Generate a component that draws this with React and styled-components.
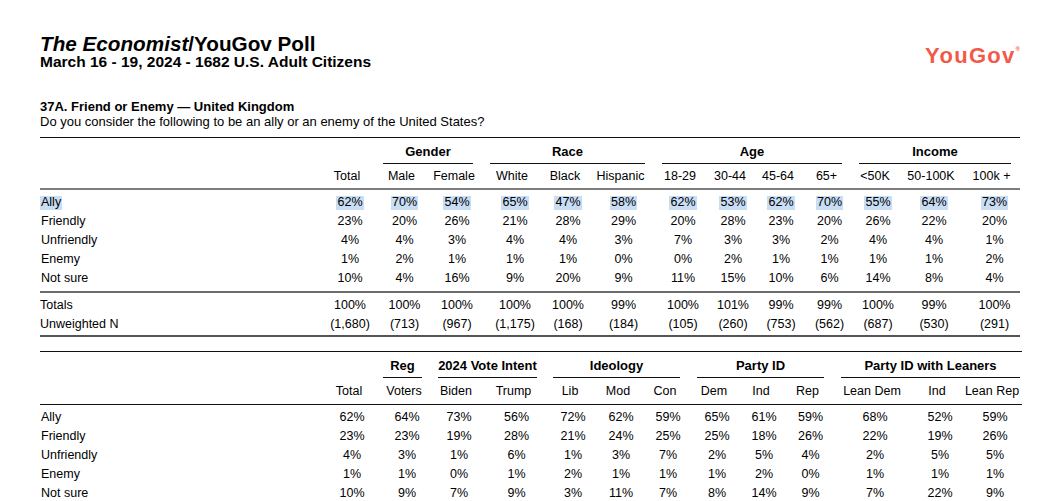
import React from 'react';
import styled, { createGlobalStyle } from 'styled-components';

const GlobalStyle = createGlobalStyle`
  body {
    margin: 0;
    background: #fff;
    color: #000;
    font-family: "Liberation Sans", Arial, Helvetica, sans-serif;
  }
`;

const Page = styled.div`
  width: 982px;
  padding: 34px 0 0 40px;
`;

const Masthead = styled.header`
  display: flex;
  justify-content: space-between;
  align-items: flex-start;
  width: 980px;
`;

const Title = styled.h1`
  margin: 0;
  font-size: 20.7px;
  line-height: 20px;
  font-weight: bold;
  em { font-style: italic; }
`;

const Dates = styled.h2`
  margin: 0;
  font-size: 15.5px;
  line-height: 15px;
  font-weight: bold;
`;

const Logo = styled.div`
  display: flex;
  align-items: flex-start;
  padding-top: 11px;
  color: #f25a48;
  font-size: 22px;
  line-height: 22px;
  font-weight: bold;
  letter-spacing: 1.3px;
`;

const Registered = styled.span`
  font-size: 6px;
  line-height: 6px;
  margin: 1px 0 0 0;
  letter-spacing: 0;
`;

const QuestionTitle = styled.h3`
  margin: 30px 0 0;
  font-size: 13px;
  line-height: 15px;
  font-weight: bold;
`;

const Question = styled.p`
  margin: 0;
  font-size: 13px;
  line-height: 15px;
`;

const Table = styled.section`
  width: ${p => p.$width}px;
  margin-top: ${p => p.$gap}px;
  border-top: 1px solid #111;
  border-bottom: ${p => p.$bottom || 'none'};
  font-size: 12.5px;
  line-height: 19px;
`;

const Band = styled.div`
  display: grid;
  grid-template-columns: ${p => p.$cols};
  padding: ${p => p.$pad};
  border-bottom: ${p => p.$rule || 'none'};
`;

const Blank = styled.div`
  grid-column: span ${p => p.$span};
`;

const GroupHead = styled.div`
  grid-column: span ${p => p.$span};
  margin: 0 ${p => p.$r ?? 8}px 0 ${p => p.$l ?? 8}px;
  padding-bottom: 1.5px;
  border-bottom: 1px solid #111;
  text-align: center;
  font-size: 13px;
  font-weight: bold;
  white-space: nowrap;
`;

const ColHead = styled.div`
  text-align: center;
  white-space: nowrap;
`;

const Stub = styled.div`
  text-align: left;
`;

const Num = styled.div`
  text-align: center;
  padding-left: 6px;
  white-space: nowrap;
`;

const Mark = styled.span`
  display: inline-block;
  line-height: 12px;
  padding: 0 1px 2px;
  background: ${p => (p.$on ? '#c9ddf5' : 'transparent')};
`;

const demoCols = '278px 58px 51px 54px 62px 44px 67px 52px 48px 48px 49px 48px 64px 57px';
const politicsCols = '280px 58px 52px 52px 63px 50px 46px 48px 50px 44px 49px 80px 50px 60px';

const demo = {
  groups: [
    { label: 'Gender', span: 2, l: 7, r: 8 },
    { label: 'Race', span: 3, l: 9, r: 9 },
    { label: 'Age', span: 4, l: 8, r: 9 },
    { label: 'Income', span: 3, l: 8, r: 9 },
  ],
  heads: ['Total', 'Male', 'Female', 'White', 'Black', 'Hispanic', '18-29', '30-44', '45-64', '65+', '<50K', '50-100K', '100k +'],
  rows: [
    ['Ally', 62, 70, 54, 65, 47, 58, 62, 53, 62, 70, 55, 64, 73],
    ['Friendly', 23, 20, 26, 21, 28, 29, 20, 28, 23, 20, 26, 22, 20],
    ['Unfriendly', 4, 4, 3, 4, 4, 3, 7, 3, 3, 2, 4, 4, 1],
    ['Enemy', 1, 2, 1, 1, 1, 0, 0, 2, 1, 1, 1, 1, 2],
    ['Not sure', 10, 4, 16, 9, 20, 9, 11, 15, 10, 6, 14, 8, 4],
  ],
  totals: [100, 100, 100, 100, 100, 99, 100, 101, 99, 99, 100, 99, 100],
  counts: ['(1,680)', '(713)', '(967)', '(1,175)', '(168)', '(184)', '(105)', '(260)', '(753)', '(562)', '(687)', '(530)', '(291)'],
};

const politics = {
  groups: [
    { label: 'Reg', span: 1, l: 5, r: 8 },
    { label: '2024 Vote Intent', span: 2 },
    { label: 'Ideology', span: 3, l: 8, r: 9 },
    { label: 'Party ID', span: 3 },
    { label: 'Party ID with Leaners', span: 3, l: 9, r: 2 },
  ],
  heads: ['Total', 'Voters', 'Biden', 'Trump', 'Lib', 'Mod', 'Con', 'Dem', 'Ind', 'Rep', 'Lean Dem', 'Ind', 'Lean Rep'],
  rows: [
    ['Ally', 62, 64, 73, 56, 72, 62, 59, 65, 61, 59, 68, 52, 59],
    ['Friendly', 23, 23, 19, 28, 21, 24, 25, 25, 18, 26, 22, 19, 26],
    ['Unfriendly', 4, 3, 1, 6, 1, 3, 7, 2, 5, 4, 2, 5, 5],
    ['Enemy', 1, 1, 0, 1, 2, 1, 1, 1, 2, 0, 1, 1, 1],
    ['Not sure', 10, 9, 7, 9, 3, 11, 7, 8, 14, 9, 7, 22, 9],
  ],
};

function Crosstab({ data, cols, width, gap, headRule, bodyRule, bottom, headPad, bodyPad, highlightFirst }) {
  return (
    <Table $width={width} $gap={gap} $bottom={bottom}>
      <Band $cols={cols} $pad="4px 0 0">
        <Blank $span={2} />
        {data.groups.map(g => (
          <GroupHead key={g.label} $span={g.span} $l={g.l} $r={g.r}>{g.label}</GroupHead>
        ))}
      </Band>
      <Band $cols={cols} $pad={headPad} $rule={headRule}>
        <Blank $span={1} />
        {data.heads.map((h, i) => <ColHead key={i}>{h}</ColHead>)}
      </Band>
      <Band $cols={cols} $pad={bodyPad} $rule={bodyRule}>
        {data.rows.map((row, r) => {
          const on = highlightFirst && r === 0;
          return (
            <React.Fragment key={row[0]}>
              <Stub><Mark $on={on}>{row[0]}</Mark></Stub>
              {row.slice(1).map((v, i) => (
                <Num key={i}><Mark $on={on}>{v}%</Mark></Num>
              ))}
            </React.Fragment>
          );
        })}
      </Band>
      {data.totals && (
        <Band $cols={cols} $pad="3px 0 1.5px">
          <Stub>Totals</Stub>
          {data.totals.map((v, i) => <Num key={i}>{v}%</Num>)}
          <Stub>Unweighted N</Stub>
          {data.counts.map((v, i) => <Num key={i}>{v}</Num>)}
        </Band>
      )}
    </Table>
  );
}

export default function App() {
  return (
    <>
      <GlobalStyle />
      <Page>
        <Masthead>
          <div>
            <Title><em>The Economist</em>/YouGov Poll</Title>
            <Dates>March 16 - 19, 2024 - 1682 U.S. Adult Citizens</Dates>
          </div>
          <Logo>
            YouGov<Registered>®</Registered>
          </Logo>
        </Masthead>

        <QuestionTitle>37A. Friend or Enemy — United Kingdom</QuestionTitle>
        <Question>Do you consider the following to be an ally or an enemy of the United States?</Question>

        <Crosstab
          data={demo}
          cols={demoCols}
          width={980}
          gap={8}
          headPad="3.5px 0 2px"
          bodyPad="3px 0 2.5px"
          headRule="2px solid #7d7d7d"
          bodyRule="2px solid #6b6b6b"
          bottom="2px solid #555"
          highlightFirst
        />
        <Crosstab
          data={politics}
          cols={politicsCols}
          width={982}
          gap={14}
          headPad="4.5px 0 2.5px"
          bodyPad="3.5px 0 0"
          headRule="1px solid #111"
        />
      </Page>
    </>
  );
}
